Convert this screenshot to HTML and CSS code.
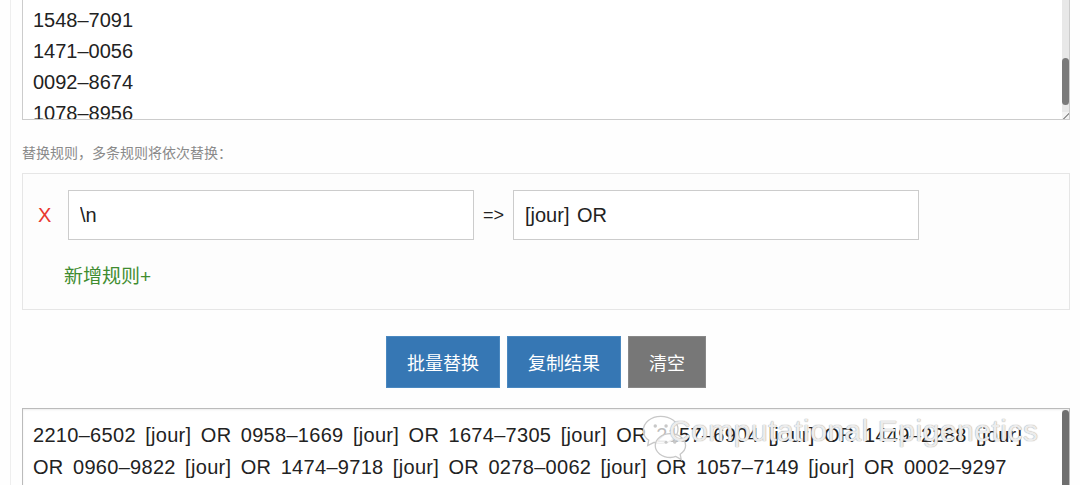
FILE: index.html
```html
<!DOCTYPE html>
<html lang="zh-CN">

<head>
    <meta charset="UTF-8">
    <meta name="viewport" content="width=device-width, initial-scale=1.0">
    <title>批量替换</title>
    <link rel="stylesheet" href="styles.css">
</head>

<body>
    <div class="page">
        <!-- Source list -->
        <div class="box source">
            <div class="box-text">1548–7091<br>1471–0056<br>0092–8674<br>1078–8956</div>
            <div class="scroll">
                <div class="track"><div class="thumb"></div></div>
                <div class="grip"></div>
            </div>
        </div>

        <p class="hint">替换规则，多条规则将依次替换：</p>

        <!-- Rules -->
        <div class="rules">
            <div class="rule">
                <span class="remove">X</span>
                <input class="field" type="text" value="\n">
                <span class="arrow">=&gt;</span>
                <input class="field" type="text" value="[jour] OR">
            </div>
            <div class="add-rule">新增规则+</div>
        </div>

        <div class="actions">
            <button class="btn btn-blue">批量替换</button>
            <button class="btn btn-blue">复制结果</button>
            <button class="btn btn-gray">清空</button>
        </div>

        <!-- Result -->
        <div class="box result">
            <div class="box-text">2210–6502 [jour] OR 0958–1669 [jour] OR 1674–7305 [jour] OR 2157–6904 [jour] OR 1449–2288 [jour]<br>OR 0960–9822 [jour] OR 1474–9718 [jour] OR 0278–0062 [jour] OR 1057–7149 [jour] OR 0002–9297</div>
            <div class="scroll">
                <div class="track"><div class="thumb"></div></div>
            </div>
            <div class="watermark">
                <svg width="48" height="52" viewBox="0 0 44 48">
                    <path d="M18 4c-9 0-16 6-16 13 0 4 2 7 5 9l-1 5 6-3c2 1 4 1 6 1 9 0 16-6 16-13S27 4 18 4z" fill="rgba(255,255,255,0.7)" stroke="#c8c8c8" stroke-width="1.2"/>
                    <circle cx="13" cy="13" r="1.6" fill="#c8c8c8"/>
                    <circle cx="23" cy="13" r="1.6" fill="#c8c8c8"/>
                    <path d="M27 20c-8 0-14 5-14 11s6 11 14 11c2 0 3 0 5-1l5 3-1-5c3-2 5-5 5-8 0-6-6-11-14-11z" fill="rgba(255,255,255,0.7)" stroke="#c8c8c8" stroke-width="1.2"/>
                    <circle cx="23" cy="28" r="1.4" fill="#c8c8c8"/>
                    <circle cx="31" cy="28" r="1.4" fill="#c8c8c8"/>
                </svg>
                <span>Computational Epigenetics</span>
            </div>
        </div>
    </div>
</body>

</html>
```

FILE: styles.css
```css
body {
    margin: 0;
    background-color: #fefefe;
    font-family: "Liberation Sans", "Noto Sans CJK SC", sans-serif;
    color: #222;
    overflow: hidden;
}

.page {
    margin: 0 10px;
    padding-left: 11px;
    border-left: 1px solid #eee;
}

.box {
    display: flex;
    border: 1px solid #ccc;
    background-color: #fff;
    overflow: hidden;
    position: relative;
}

.box-text {
    flex: 1;
    padding: 0 10px;
    font-size: 20px;
    white-space: nowrap;
}

.source {
    height: 119px;
    border-top: none;
}

.source .box-text {
    padding-top: 5px;
    line-height: 31px;
}

.result {
    margin-top: 20px;
    height: 120px;
    border-color: #bbb;
    box-shadow: inset 0 1px 2px rgba(0, 0, 0, 0.08);
}

.result .box-text {
    padding-top: 10px;
    line-height: 32px;
    letter-spacing: 0.3px;
    word-spacing: 3.5px;
}

.scroll {
    width: 7px;
    display: flex;
    flex-direction: column;
}

.track {
    flex: 1;
    background-color: #e8e8e8;
}

.thumb {
    background-color: #7a7a7a;
    border-radius: 4px;
}

.source .track {
    padding-top: 58px;
}

.source .thumb {
    height: 47px;
}

.result .scroll {
    padding-top: 1px;
}

.result .thumb {
    height: 100px;
    background-color: #6f6f6f;
}

.grip {
    height: 7px;
    background: linear-gradient(135deg, #f2f2f2 55%, #999 55%, #999 65%, #f2f2f2 65%);
}

.hint {
    margin: 23px 0 10px;
    font-size: 14px;
    line-height: 20px;
    color: #8a8a8a;
}

.rules {
    border: 1px solid #e6e6e6;
    background-color: #fdfdfd;
    padding: 16px 15px 19px;
}

.rule {
    display: flex;
    align-items: center;
}

.remove {
    width: 30px;
    color: #e8392f;
    font-size: 20px;
}

.field {
    width: 406px;
    height: 50px;
    box-sizing: border-box;
    border: 1px solid #ccc;
    padding: 0 11px;
    font-family: "Liberation Sans", "Noto Sans CJK SC", sans-serif;
    font-size: 20px;
    color: #222;
    word-spacing: 2px;
    background-color: #fff;
}

.arrow {
    width: 39px;
    text-align: center;
    font-size: 18px;
}

.add-rule {
    margin-top: 24px;
    padding-left: 26px;
    line-height: 26px;
    font-size: 19px;
    color: #3f8c30;
}

.actions {
    margin-top: 26px;
    display: flex;
    justify-content: center;
    gap: 7px;
}

.btn {
    height: 52px;
    padding: 0 20px;
    border: 1px solid #4a88c0;
    font-family: "Noto Sans CJK SC", sans-serif;
    font-size: 18px;
    color: #fff;
    cursor: pointer;
}

.btn-blue {
    background-color: #3677b4;
}

.btn-gray {
    background-color: #777;
    border-color: #888;
}

.watermark {
    position: absolute;
    left: 618px;
    top: 3px;
    display: flex;
    align-items: center;
    font-size: 30px;
    letter-spacing: 0.5px;
    color: rgba(255, 255, 255, 0.8);
    text-shadow: 0 0 1px #aaa, 0 0 1px #aaa;
}

.watermark span {
    margin-left: -20px;
    margin-top: -14px;
}
```
